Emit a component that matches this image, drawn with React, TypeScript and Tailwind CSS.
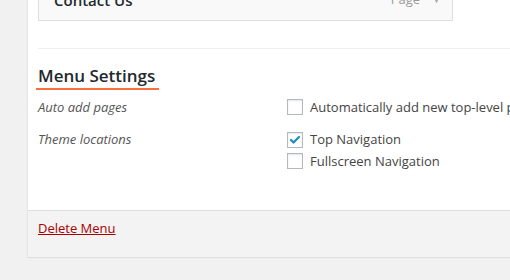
import { Check } from "lucide-react";

function Box({ checked }: { checked?: boolean }) {
  return (
    <span className="flex h-4 w-4 shrink-0 items-center justify-center border border-[#b4b9be] bg-white shadow-[inset_0_1px_2px_rgba(0,0,0,0.1)]">
      {checked && <Check className="h-3 w-3 text-[#1e8cbe]" strokeWidth={4.5} />}
    </span>
  );
}

export default function App() {
  return (
    <div className="h-[280px] w-[510px] overflow-hidden bg-[#f1f1f1] pl-[27px] font-['Open_Sans',sans-serif] text-[13px] text-[#444]">
      <div className="w-[520px] border-l border-[#e5e5e5] shadow-[0_1px_1px_rgba(0,0,0,0.07)]">
        <div className="bg-white px-[10px] pb-[39px]">
          <div className="-mt-[21px] flex h-[42px] w-[415px] items-center border border-[#dfdfdf] bg-[#f9f9f9] pl-[15px] pr-[11px]">
            <span className="text-[15px] font-semibold text-[#23282d]">Contact Us</span>
            <span className="ml-auto text-[13px] text-[#999]">Page</span>
            <span className="ml-[12px] text-[9px] text-[#aaa]">▼</span>
          </div>
          <div className="mt-[27px] border-t border-[#eee]" />
          <div className="mt-[16px] -ml-[2px] inline-block border-b-[2px] border-[#fd6e3e] pl-[2px] pr-[4px]">
            <span className="text-[17px] font-semibold leading-[22px] text-[#23282d]">Menu Settings</span>
          </div>
          <div className="mt-[8px] flex">
            <div className="w-[249px] shrink-0 italic text-[#555]">Auto add pages</div>
            <label className="flex items-center gap-[7px] whitespace-nowrap text-[#444]">
              <Box />
              Automatically add new top-level pages to this menu
            </label>
          </div>
          <div className="mt-[13px] flex">
            <div className="w-[249px] shrink-0 italic text-[#555]">Theme locations</div>
            <div className="flex flex-col gap-[2px]">
              <label className="flex items-center gap-[7px] text-[#444]">
                <Box checked />
                Top Navigation
              </label>
              <label className="flex items-center gap-[7px] text-[#444]">
                <Box />
                Fullscreen Navigation
              </label>
            </div>
          </div>
        </div>
        <div className="border-t border-[#ddd] bg-[#f3f3f3] px-[10px] pb-[18px] pt-[8px]">
          <a href="#" className="text-[13px] leading-[18px] text-[#a00] underline">Delete Menu</a>
        </div>
      </div>
    </div>
  );
}
